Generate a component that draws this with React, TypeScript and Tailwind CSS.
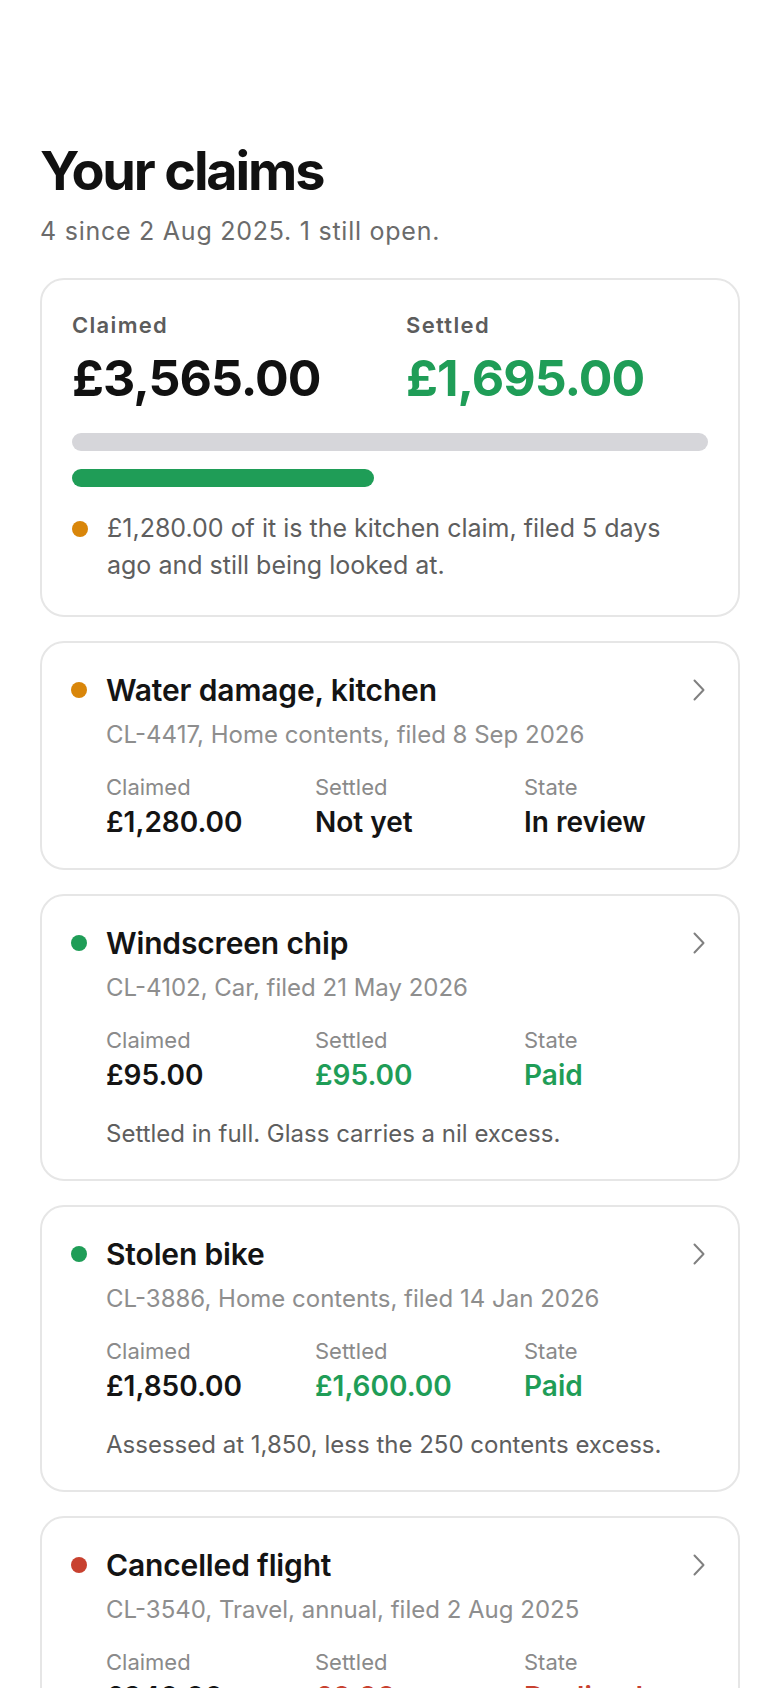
import React from 'react';

type Claim = {
  title: string;
  meta: string;
  tone: 'amber' | 'green' | 'red';
  claimed: string;
  settled: string;
  state: string;
  note?: string;
};

const claims: Claim[] = [
  {
    title: 'Water damage, kitchen',
    meta: 'CL-4417, Home contents, filed 8 Sep 2026',
    tone: 'amber',
    claimed: '£1,280.00',
    settled: 'Not yet',
    state: 'In review',
  },
  {
    title: 'Windscreen chip',
    meta: 'CL-4102, Car, filed 21 May 2026',
    tone: 'green',
    claimed: '£95.00',
    settled: '£95.00',
    state: 'Paid',
    note: 'Settled in full. Glass carries a nil excess.',
  },
  {
    title: 'Stolen bike',
    meta: 'CL-3886, Home contents, filed 14 Jan 2026',
    tone: 'green',
    claimed: '£1,850.00',
    settled: '£1,600.00',
    state: 'Paid',
    note: 'Assessed at 1,850, less the 250 contents excess.',
  },
  {
    title: 'Cancelled flight',
    meta: 'CL-3540, Travel, annual, filed 2 Aug 2025',
    tone: 'red',
    claimed: '£340.00',
    settled: '£0.00',
    state: 'Declined',
    note: 'Cancelled for weather, which the policy excludes.',
  },
];

const dotColor = {
  amber: 'bg-[#d9860a]',
  green: 'bg-[#1f9d57]',
  red: 'bg-[#c8412f]',
};

const valueColor = {
  amber: 'text-[#141414]',
  green: 'text-[#1f9d57]',
  red: 'text-[#c8412f]',
};

const Chevron = () => (
  <svg width="20" height="24" viewBox="0 0 20 24" fill="none" className="shrink-0">
    <path d="M5.5 2.5 L14.5 12 L5.5 21.5" stroke="#808080" strokeWidth="2" strokeLinecap="round" strokeLinejoin="round" />
  </svg>
);

const ClaimCard: React.FC<{ claim: Claim }> = ({ claim }) => {
  const settledTone = claim.settled === 'Not yet' ? 'text-[#141414]' : valueColor[claim.tone];
  const stateTone = claim.tone === 'amber' ? 'text-[#141414]' : valueColor[claim.tone];

  return (
    <div className="rounded-[24px] border-2 border-[#e6e6e6] bg-white p-[29px]">
      <div className="flex gap-[19px]">
        <div className="flex h-[36px] w-[16px] shrink-0 items-center">
          <span className={`h-[16px] w-[16px] rounded-full ${dotColor[claim.tone]}`} />
        </div>
        <div className="min-w-0 flex-1">
          <div className="flex items-center justify-between">
            <h2 className="text-[30px] leading-[36px] font-semibold tracking-[-0.005em] text-[#141414]">{claim.title}</h2>
            <Chevron />
          </div>
          <p className="mt-[12px] text-[24px] leading-[30px] text-[#8e8e8e]">{claim.meta}</p>
          <div className="mt-[23px] grid grid-cols-3 gap-x-6">
            <div>
              <div className="text-[22px] leading-[28px] text-[#8a8a8a]">Claimed</div>
              <div className="mt-[4px] text-[28px] leading-[34px] font-semibold text-[#141414]">{claim.claimed}</div>
            </div>
            <div>
              <div className="text-[22px] leading-[28px] text-[#8a8a8a]">Settled</div>
              <div className={`mt-[4px] text-[28px] leading-[34px] font-semibold ${settledTone}`}>{claim.settled}</div>
            </div>
            <div>
              <div className="text-[22px] leading-[28px] text-[#8a8a8a]">State</div>
              <div className={`mt-[4px] text-[28px] leading-[34px] font-semibold ${stateTone}`}>{claim.state}</div>
            </div>
          </div>
          {claim.note && (
            <p className="mt-[26px] text-[24px] leading-[32px] text-[#5e5e5e]">{claim.note}</p>
          )}
        </div>
      </div>
    </div>
  );
};

export default function App() {
  const settledShare = (1695 / 3565) * 100;

  return (
    <div className="min-h-screen bg-white px-10 pt-[141px] pb-10 font-['Inter',_'Noto_Sans',_sans-serif]">
      <h1 className="text-[54px] leading-[59px] font-bold tracking-[-0.04em] text-[#111111]">Your claims</h1>
      <p className="mt-[16px] text-[25px] leading-[30px] tracking-[0.03em] text-[#6b6b6b]">4 since 2 Aug 2025. 1 still open.</p>

      <div className="mt-[32px] flex flex-col gap-[24px]">
        <div className="rounded-[24px] border-2 border-[#e6e6e6] bg-white px-[30px] pt-[31px] pb-[31px]">
          <div className="grid grid-cols-2 gap-x-8">
            <div>
              <div className="text-[22px] leading-[28px] font-semibold tracking-[0.06em] text-[#5c5c5c]">Claimed</div>
              <div className="mt-[12px] text-[50px] leading-[55px] font-bold tracking-[-0.02em] text-[#111111]">£3,565.00</div>
            </div>
            <div>
              <div className="text-[22px] leading-[28px] font-semibold tracking-[0.06em] text-[#5c5c5c]">Settled</div>
              <div className="mt-[12px] text-[50px] leading-[55px] font-bold tracking-[-0.02em] text-[#1f9d57]">£1,695.00</div>
            </div>
          </div>
          <div className="mt-[27px] h-[18px] w-full rounded-full bg-[#d6d6da]" />
          <div className="mt-[18px] h-[18px] rounded-full bg-[#1f9d57]" style={{ width: `${settledShare}%` }} />
          <div className="mt-[23px] flex gap-[19px]">
            <div className="flex h-[37px] w-[16px] shrink-0 items-center">
              <span className="h-[16px] w-[16px] rounded-full bg-[#d9860a]" />
            </div>
            <p className="max-w-[580px] text-[25px] leading-[37px] text-[#5e5e5e]">
              £1,280.00 of it is the kitchen claim, filed 5 days ago and still being looked at.
            </p>
          </div>
        </div>

        {claims.map((c) => (
          <ClaimCard key={c.meta} claim={c} />
        ))}
      </div>
    </div>
  );
}
